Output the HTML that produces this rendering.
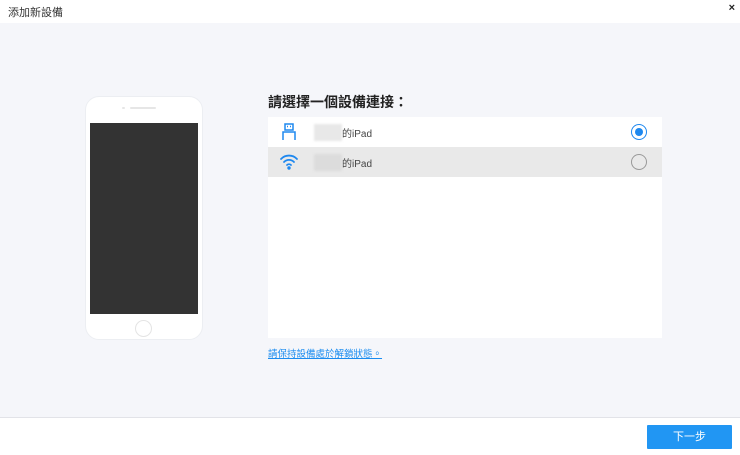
<!DOCTYPE html>
<html><head><meta charset="utf-8"><style>
*{margin:0;padding:0;box-sizing:border-box}
body{width:740px;height:455px;background:#fff;font-family:"Liberation Sans","Noto Sans CJK TC",sans-serif;position:relative;overflow:hidden}
.top{position:absolute;left:0;top:0;width:740px;height:23px;background:#fff}
.title{position:absolute;left:8px;top:4px;font-size:11px;color:#333}
.x{position:absolute;right:5px;top:2px;font-size:11px;font-weight:bold;color:#222}
.main{position:absolute;left:0;top:23px;width:740px;height:395px;background:#f5f6fa;border-bottom:1px solid #e2e3e8}
.phone{position:absolute;left:85px;top:96px;width:118px;height:244px;background:#fff;border:1px solid #eceef2;border-radius:14px}
.screen{position:absolute;left:90px;top:123px;width:108px;height:191px;background:#333}
.spk{position:absolute;left:130px;top:107px;width:26px;height:2px;background:#e6e6e6;border-radius:1px}
.cam{position:absolute;left:122px;top:107px;width:3px;height:2px;background:#e6e6e6;border-radius:1px}
.home{position:absolute;left:135px;top:320px;width:17px;height:17px;border:1px solid #e4e4e4;border-radius:50%}
h1{position:absolute;left:268px;top:92px;font-size:14px;font-weight:bold;color:#222}
.list{position:absolute;left:268px;top:117px;width:394px;height:221px;background:#fff}
.row{position:absolute;left:0;width:394px;height:30px}
.blur{position:absolute;left:46px;top:7px;width:28px;height:17px;background:#e8e8e8;filter:blur(1px)}
.r2 .blur{background:#dcdcdc}
.name{position:absolute;left:74px;top:8px;font-size:10px;color:#444}
.radio{position:absolute;left:363px;top:7px;width:16px;height:16px;border-radius:50%;border:1px solid #999}
.sel{border:1.5px solid #1e88ef}
.sel:after{content:"";position:absolute;left:2.5px;top:2.5px;width:8px;height:8px;border-radius:50%;background:#1e88ef}
.link{position:absolute;left:268px;top:346px;font-size:9.5px;color:#1a8cf0;text-decoration:underline}
.btn{position:absolute;left:647px;top:425px;width:85px;height:24px;background:#2196f3;color:#fff;font-size:11px;text-align:center;line-height:24px;border-radius:1px}
</style></head><body>
<div class="top"><div class="title">添加新設備</div><div class="x">×</div></div>
<div class="main"></div>
<div class="phone"></div><div class="screen"></div><div class="cam"></div><div class="spk"></div><div class="home"></div>
<h1>請選擇一個設備連接：</h1>
<div class="list">
 <div class="row" style="top:0">
  <svg style="position:absolute;left:13px;top:6px" width="16" height="18" viewBox="0 0 16 18" fill="none" stroke="#1e88ef" stroke-width="1.5"><rect x="4" y="1" width="8" height="6"/><path d="M6 3.5h1M9 3.5h1"/><path d="M2 17V9h12v8"/></svg>
  <div class="blur"></div><div class="name">的iPad</div><div class="radio sel"></div></div>
 <div class="row r2" style="top:30px;background:#e9e9e9">
  <svg style="position:absolute;left:11px;top:6px" width="20" height="17" viewBox="0 0 20 17" fill="none" stroke="#1e88ef" stroke-width="1.8" stroke-linecap="round"><path d="M2 6a11 11 0 0 1 16 0"/><path d="M5 9a7 7 0 0 1 10 0"/><path d="M8 12a3 3 0 0 1 4 0"/><circle cx="10" cy="15" r="0.8" fill="#1e88ef"/></svg>
  <div class="blur"></div><div class="name">的iPad</div><div class="radio"></div></div>
</div>
<div class="link">請保持設備處於解鎖狀態。</div>
<div class="btn">下一步</div>
</body></html>
